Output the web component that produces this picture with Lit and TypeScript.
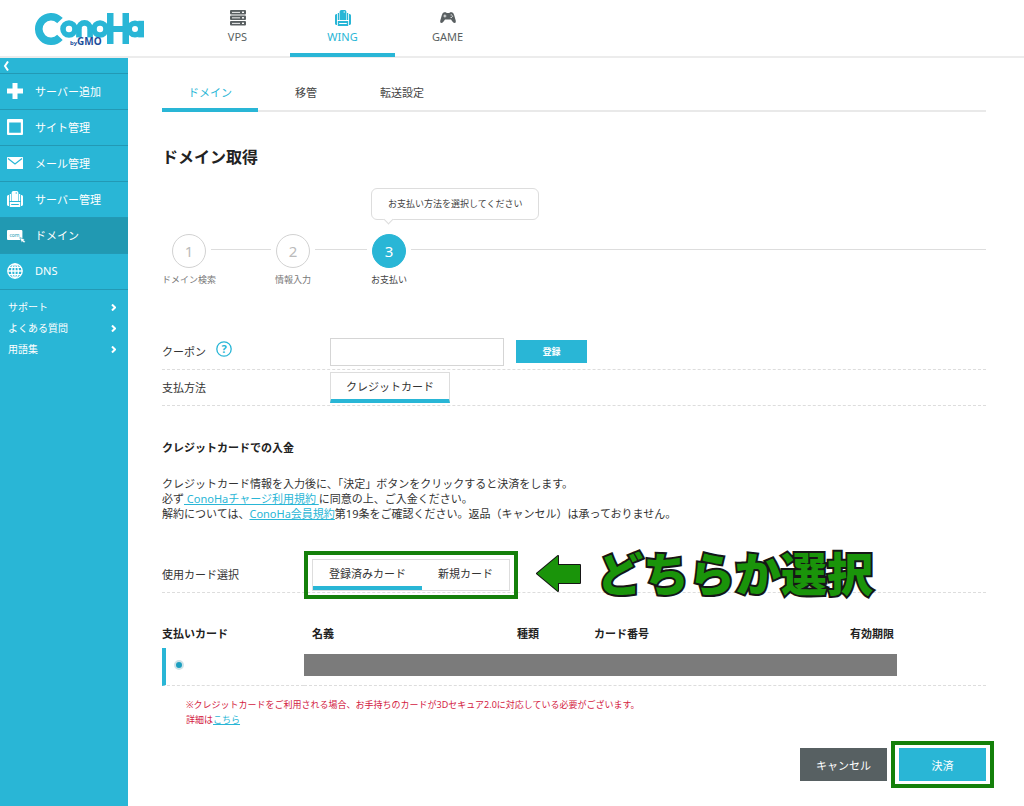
import { LitElement, html, css, svg } from "lit";
import { customElement, state } from "lit/decorators.js";
import { classMap } from "lit/directives/class-map.js";

const serverRack = svg`
  <rect x="0" y="0" width="16" height="4.6" rx="1"/>
  <rect x="0" y="5.5" width="16" height="4.6" rx="1"/>
  <rect x="0" y="11" width="16" height="4.6" rx="1"/>
  <g fill="#fff">
    <rect x="2" y="1.9" width="8" height=".9"/><rect x="12" y="1.6" width="2" height="1.4"/>
    <rect x="2" y="7.4" width="8" height=".9"/><rect x="12" y="7.1" width="2" height="1.4"/>
    <rect x="2" y="12.9" width="8" height=".9"/><rect x="12" y="12.6" width="2" height="1.4"/>
  </g>`;

const wing = (gap: string) => svg`
  <path d="M0 5.5Q0 4 1.4 4H2V15H1.2Q0 15 0 13.6ZM16 5.5Q16 4 14.6 4H14V15H14.8Q16 15 16 13.6ZM2.8 3H4V10H2.8ZM13.2 3H12V10H13.2Z"/>
  <path d="M4.6 1.8Q4.6 0 6.4 0H9.8Q11.4 0 11.4 1.8V10H4.6ZM2.8 11H13.2V16H2.8Z"/>
  <path d="M4.2 13.5H11.8" stroke="${gap}" stroke-width="1"/>
  <path d="M8.6 2H10" stroke="${gap}" stroke-width="1"/>`;

const gamepad = svg`
  <path d="M4.2 2.2H6L6.6 3H9.4L10 2.2H11.8Q13.4 2.4 14.2 5.2L15.7 10.4Q16.2 13 14.5 13Q13.3 13 12.2 11.2L11 9.6H5L3.8 11.2Q2.7 13 1.5 13Q-.2 13 .3 10.4L1.8 5.2Q2.6 2.4 4.2 2.2Z"/>
  <path d="M3.4 6H6.4M4.9 4.5V7.5" stroke="#fff" stroke-width=".8"/>
  <circle cx="11.2" cy="4.9" r=".6" fill="#fff"/><circle cx="11.2" cy="7.4" r=".6" fill="#fff"/>
  <circle cx="12.6" cy="6.1" r=".6" fill="#fff"/>`;

const sideIcons = {
  plus: svg`<path d="M5.5 0H10.5V5.5H16V10.5H10.5V16H5.5V10.5H0V5.5H5.5Z"/>`,
  site: svg`<path fill-rule="evenodd" d="M1 0H15Q16 0 16 1V15Q16 16 15 16H1Q0 16 0 15V1Q0 0 1 0ZM2.2 3.4V13.8H13.8V3.4Z"/>`,
  mail: svg`<rect x="0" y="2" width="16" height="12" rx=".6"/><path d="M1 3.5L8 9L15 3.5" fill="none" stroke="#29b6d6" stroke-width="1.2"/>`,
  server: wing("#29b6d6"),
  domain: svg`<rect x="0" y="3" width="15.4" height="10" rx="1"/>
    <path d="M12.8 10.6L17.6 12.2L16.8 13.2L18.4 14.8L17 16L15.6 14.6L14.6 15.6Z" stroke="#2199b2" stroke-width=".6"/>
    <text x="2.4" y="9.8" font-size="5" fill="#2199b2" font-family="Noto Sans, sans-serif">com</text>`,
  dns: svg`<g fill="none" stroke="#fff" stroke-width="1.3"><circle cx="8" cy="8" r="7.2"/>
    <ellipse cx="8" cy="8" rx="3.4" ry="7.2"/><path d="M8 .8V15.2M.8 8H15.2M2 4.4H14M2 11.6H14"/></g>`,
};

@customElement("app-header")
class AppHeader extends LitElement {
  static styles = css`
    :host { display: flex; border-bottom: 2px solid #ececec; height: 56px; background: #fff; }
    .logo { display: block; width: 150px; padding: 12px 0 0 35px; }
    .logo svg { display: block; width: 110px; height: 36px; }
    nav { display: flex; }
    .product { box-sizing: border-box; width: 105px; height: 57px; padding-top: 10px; display: flex; flex-direction: column;
      align-items: center; gap: 1px; color: #595f61; text-decoration: none; font-size: 11px; line-height: 20px; }
    .product svg { width: 16px; height: 16px; fill: currentColor; }
    .active { color: #29b6d6; border-bottom: 4px solid #29b6d6; }
  `;
  render() {
    return html`
      <a class="logo" href="#" aria-label="ConoHa by GMO">
        <svg viewBox="0 0 110 36">
          <g fill="none" stroke="#29b6d6">
            <circle cx="16" cy="17" r="12.2" stroke-width="7.6" pathLength="360" stroke-dasharray="274 86" transform="rotate(43 16 17)"/>
            <circle cx="34" cy="17" r="6" stroke-width="5.6"/>
            <circle cx="65" cy="17" r="6" stroke-width="5.6"/>
            <circle cx="49.5" cy="16.5" r="5.6" stroke-width="5.6" pathLength="360" stroke-dasharray="180 180" transform="rotate(180 49.5 16.5)"/>
            <circle cx="100" cy="17" r="5.8" stroke-width="5.6"/>
          </g>
          <g fill="#29b6d6">
            <rect x="41.1" y="16" width="5.6" height="9.4"/><rect x="52.3" y="16" width="5.6" height="9.4"/>
            <rect x="72" y="1" width="6.5" height="31"/><rect x="87.5" y="1" width="6.5" height="31"/>
            <rect x="72" y="14" width="20" height="6"/><rect x="103.2" y="8.8" width="5.8" height="16.6"/>
          </g>
          <text x="35" y="33" font-size="6" font-weight="700" fill="#1d4f9c">by</text>
          <text x="42" y="33.2" font-size="10" font-weight="700" fill="#1d4f9c">GMO</text>
        </svg>
      </a>
      <nav>
        <a class="product" href="#"><svg viewBox="0 0 16 16">${serverRack}</svg>VPS</a>
        <a class="product active" href="#"><svg viewBox="0 0 16 16">${wing("#fff")}</svg>WING</a>
        <a class="product" href="#"><svg viewBox="0 0 16 16">${gamepad}</svg>GAME</a>
      </nav>`;
  }
}

@customElement("app-sidebar")
class AppSidebar extends LitElement {
  static styles = css`
    :host { display: block; background: #29b6d6; }
    .collapse { display: flex; align-items: center; width: 100%; height: 15px; padding: 0 3px; border: 0; background: none; }
    .collapse svg { width: 6px; height: 10px; }
    .item { box-sizing: border-box; display: flex; align-items: center; gap: 12px; height: 36px; padding: 0 0 2px 7px;
      border-top: 1px solid #2399b5; color: #fff; text-decoration: none; font-size: 11px; }
    .item svg { width: 16px; height: 16px; fill: #fff; overflow: visible; }
    .active { background: #2199b2; }
    .links { border-top: 1px solid #2399b5; padding: 7px 12px 0 8px; }
    .link { display: flex; justify-content: space-between; align-items: center; color: #fff; text-decoration: none;
      font-size: 10px; line-height: 21px; }
    .link svg { width: 5px; height: 7px; }
    .stroke { fill: none; stroke: #fff; stroke-width: 2; }
  `;
  items: [keyof typeof sideIcons, string][] = [
    ["plus", "サーバー追加"], ["site", "サイト管理"], ["mail", "メール管理"],
    ["server", "サーバー管理"], ["domain", "ドメイン"], ["dns", "DNS"],
  ];
  render() {
    return html`
      <button class="collapse" aria-label="メニューを閉じる"><svg viewBox="0 0 6 10"><path class="stroke" d="M5 .5L2 5L5 9.5"/></svg></button>
      ${this.items.map(([icon, label]) => html`
        <a href="#" class=${classMap({ item: true, active: icon === "domain" })}>
          <svg viewBox="0 0 16 16">${sideIcons[icon]}</svg>${label}</a>`)}
      <div class="links">
        ${["サポート", "よくある質問", "用語集"].map((label) => html`
          <a class="link" href="#">${label}<svg viewBox="0 0 5 7"><path class="stroke" d="M1 .5L4 3.5L1 6.5"/></svg></a>`)}
      </div>`;
  }
}

@customElement("domain-payment")
class DomainPayment extends LitElement {
  @state() private savedCard = true;

  static styles = css`
    :host { display: block; padding: 0 38px 16px 34px; color: #333; font-size: 11px; line-height: 15px; }
    a { color: #29b6d6; }
    button, input { font-family: inherit; }
    .tabs { display: flex; border-bottom: 2px solid #e9e9e9; height: 52px; }
    .tab { box-sizing: border-box; width: 96px; height: 54px; line-height: 70px; text-align: center; color: #444; text-decoration: none; }
    .tab.active { color: #29b6d6; border-bottom: 4px solid #29b6d6; }
    h1 { margin: 33px 0 65px; font-size: 16px; line-height: 24px; color: #222; }
    .steps { display: grid; grid-template-columns: 54px 59px 36px 60px 36px 1fr; list-style: none; margin: 0; padding: 0; }
    .step { position: relative; display: flex; flex-direction: column; align-items: center; gap: 4px; font-size: 9px; white-space: nowrap; color: #777; }
    .circle { box-sizing: border-box; width: 34px; height: 34px; border: 1px solid #d2d2d2; border-radius: 50%;
      display: grid; place-items: center; font-size: 15px; color: #bbb; }
    .current { color: #444; }
    .current .circle { background: #29b6d6; border-color: #29b6d6; color: #fff; }
    .line { height: 1px; background: #ddd; margin: 15px 4px 0; }
    .line.first { margin-left: -5px; }
    .line.last { margin-right: 0; }
    .tip { position: absolute; left: 0; top: -46px; padding: 7px 16px 8px; border: 1px solid #ddd; border-radius: 6px; background: #fff; color: #444; }
    .tip::after { content: ""; position: absolute; left: 13px; bottom: -4px; width: 6px; height: 6px; background: #fff;
      border: solid #ddd; border-width: 0 1px 1px 0; transform: rotate(45deg); }
    .row { display: grid; grid-template-columns: 168px 1fr; align-items: center; border-bottom: 1px dashed #ddd; box-sizing: border-box; height: 36px; }
    .coupon { margin-top: 47px; }
    .label { display: flex; align-items: center; gap: 10px; }
    .help { width: 16px; height: 16px; padding: 0 0 6px; box-sizing: content-box; border: 0; background: none; }
    .help svg { display: block; width: 16px; height: 16px; }
    .controls { display: flex; align-items: center; gap: 12px; }
    .code { box-sizing: border-box; width: 174px; height: 28px; border: 1px solid #d5d5d5; }
    .apply { width: 71px; height: 23px; border: 0; padding: 0; background: #29b6d6; color: #fff; font-size: 9px; font-weight: 700; }
    .choice { box-sizing: border-box; height: 31px; padding: 0 15px; background: #fff; border: 1px solid #ddd; border-bottom: 4px solid #29b6d6; color: #333; font-size: 11px; }
    h2 { margin: 34px 0 21px; font-size: 11px; line-height: 15px; color: #222; }
    p { margin: 0; }
    .select { grid-template-columns: 150px 1fr; margin-top: 36px; position: relative; }
    .toggle { position: relative; display: flex; border: 1px solid #ddd; box-sizing: border-box; height: 32px; }
    .option { height: 30px; border: 0; border-bottom: 4px solid transparent; padding: 0 16px; background: none; color: #333; font-size: 11px; }
    .option.on { border-color: #29b6d6; }
    .mark { position: absolute; inset: -8px; border: 4px solid #14800a; pointer-events: none; }
    .toggle .mark { inset: -9px; }
    .note { position: absolute; left: 374px; top: -10px; display: flex; align-items: center; gap: 16px; color: #1a940a;
      font-size: 46px; line-height: 52px; font-weight: 900; -webkit-text-stroke: 4px #161616; paint-order: stroke fill; white-space: nowrap; }
    .note svg { width: 45px; height: 37px; }
    table { width: 100%; margin-top: 33px; border-collapse: separate; border-spacing: 0; table-layout: fixed; }
    th { box-sizing: border-box; text-align: left; padding: 0 0 7px 8px; color: #222; }
    th:first-child { padding-left: 0; width: 142px; }
    .holder { width: 205px; } .kind { width: 77px; } .number { width: 256px; }
    td { padding: 0 0 4px; height: 33px; border-bottom: 1px dashed #ddd; }
    td:first-child { border-left: 4px solid #29b6d6; }
    .radio { appearance: none; box-sizing: border-box; display: block; width: 10px; height: 10px; margin: 0 0 0 8px; border: 2px solid #cfe3e8; border-radius: 50%; background: #1c9fc0; }
    .masked { width: 87%; height: 22px; background: #7b7b7b; }
    .notice { margin: 11px 0 0 24px; font-size: 9px; color: #d3213f; }
    .actions { display: flex; justify-content: flex-end; gap: 12px; margin-top: 21px; }
    .action { position: relative; width: 87px; height: 33px; border: 0; padding: 0; color: #fff; font-size: 11px; background: #576062; }
    .submit { background: #29b6d6; }
    .submit .mark { inset: -7px -8px; }
  `;

  render() {
    return html`
      <nav class="tabs">
        <a class="tab active" href="#">ドメイン</a><a class="tab" href="#">移管</a><a class="tab" href="#">転送設定</a>
      </nav>
      <h1>ドメイン取得</h1>
      <ol class="steps">
        <li class="step"><span class="circle">1</span>ドメイン検索</li>
        <li class="line first" role="presentation"></li>
        <li class="step"><span class="circle">2</span>情報入力</li>
        <li class="line" role="presentation"></li>
        <li class="step current"><span class="circle">3</span>お支払い<span class="tip">お支払い方法を選択してください</span></li>
        <li class="line last" role="presentation"></li>
      </ol>
      <div class="row coupon">
        <div class="label"><label for="coupon">クーポン</label>
          <button class="help" aria-label="ヘルプ"><svg viewBox="0 0 16 16"><circle cx="8" cy="8" r="7.2" fill="none" stroke="#29b6d6" stroke-width="1.3"/><text x="8" y="12" text-anchor="middle" font-size="11" font-weight="700" fill="#29b6d6">?</text></svg></button>
        </div>
        <div class="controls"><input class="code" id="coupon" type="text"><button class="apply">登録</button></div>
      </div>
      <div class="row"><span>支払方法</span><div class="controls"><button class="choice">クレジットカード</button></div></div>
      <h2>クレジットカードでの入金</h2>
      <p>クレジットカード情報を入力後に、「決定」ボタンをクリックすると決済をします。<br>
        必ず<a href="#"> ConoHaチャージ利用規約 </a>に同意の上、ご入金ください。<br>
        解約については、<a href="#">ConoHa会員規約</a>第19条をご確認ください。返品（キャンセル）は承っておりません。</p>
      <div class="row select"><span>使用カード選択</span>
        <div class="controls"><div class="toggle">
          <button class=${classMap({ option: true, on: this.savedCard })} @click=${() => (this.savedCard = true)}>登録済みカード</button>
          <button class=${classMap({ option: true, on: !this.savedCard })} @click=${() => (this.savedCard = false)}>新規カード</button>
          <span class="mark"></span>
        </div></div>
        <div class="note"><svg viewBox="0 0 45 37"><path d="M1 18.5L22 1V10H44V28H22V36Z" fill="#1a940a" stroke="#161616" stroke-width="2" stroke-linejoin="round"/></svg>どちらか選択</div>
      </div>
      <table>
        <thead><tr><th>支払いカード</th><th class="holder">名義</th><th class="kind">種類</th><th class="number">カード番号</th><th>有効期限</th></tr></thead>
        <tbody><tr><td><input class="radio" type="radio" name="card" checked aria-label="支払いカード"></td><td colspan="4"><div class="masked"></div></td></tr></tbody>
      </table>
      <p class="notice">※クレジットカードをご利用される場合、お手持ちのカードが3Dセキュア2.0に対応している必要がございます。<br>詳細は<a href="#">こちら</a></p>
      <div class="actions"><button class="action">キャンセル</button><button class="action submit">決済<span class="mark"></span></button></div>`;
  }
}

@customElement("app-root")
class AppRoot extends LitElement {
  static styles = css`
    :host { display: flex; flex-direction: column; min-height: 100vh; background: #fff; font-family: "Noto Sans", "Noto Sans CJK JP", sans-serif; }
    .body { flex: 1; display: grid; grid-template-columns: 128px 1fr; }
  `;
  render() {
    return html`<app-header></app-header>
      <div class="body"><app-sidebar></app-sidebar><domain-payment></domain-payment></div>`;
  }
}
